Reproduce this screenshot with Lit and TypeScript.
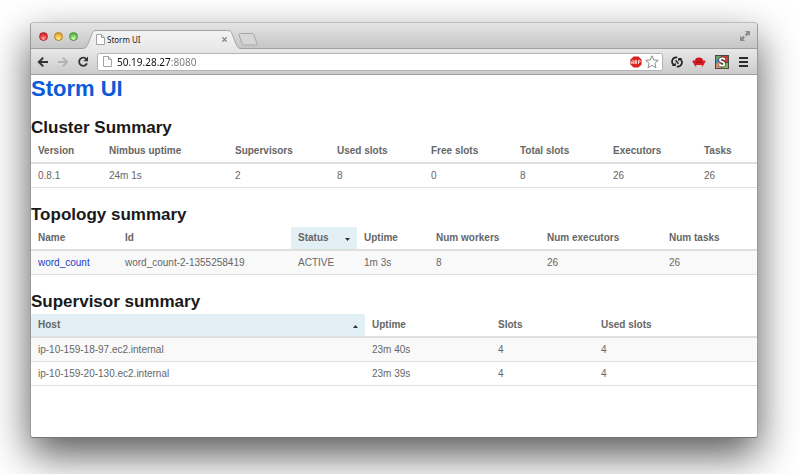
import { LitElement, html, css, svg, nothing } from "lit";
import { customElement, property } from "lit/decorators.js";

interface Column {
  label: string;
  weight: number;
  sort?: "up" | "down";
}

interface Cell {
  text: string;
  href?: string;
}

const pageIcon = svg`
  <path d="M0.5 0.5 H5.5 L8.5 3.5 V10.5 H0.5 Z" fill="#fdfdfd" stroke="#a2a2a2"/>
  <path d="M5.5 0.5 V3.5 H8.5" fill="none" stroke="#a2a2a2"/>`;

@customElement("summary-table")
export class SummaryTable extends LitElement {
  @property() heading = "";
  @property({ type: Boolean }) striped = false;
  @property({ attribute: false }) columns: Column[] = [];
  @property({ attribute: false }) rows: Cell[][] = [];

  static styles = css`
    :host {
      display: block;
    }
    .heading {
      margin: 0;
      padding-top: 2px;
      font-size: 17px;
      line-height: 24px;
      font-weight: bold;
      color: #1a1a1a;
    }
    .table {
      width: 100%;
      table-layout: fixed;
      border-collapse: separate;
      border-spacing: 0;
      font-size: 10px;
      line-height: 23px;
      color: #666;
    }
    .head,
    .cell {
      box-sizing: border-box;
      padding: 0 7px;
      text-align: left;
      white-space: nowrap;
    }
    .head {
      height: 24px;
      line-height: 22px;
      border-bottom: 2px solid #dfdfdf;
    }
    .cell {
      height: 24px;
      border-bottom: 1px solid #dfdfdf;
    }
    .sorted {
      background: #e2eff5;
      background-clip: padding-box;
      border-radius: 2px 2px 0 0;
    }
    .label {
      display: flex;
      align-items: center;
      justify-content: space-between;
    }
    .arrow {
      width: 5px;
      height: 3px;
      margin-top: 3px;
      fill: #333;
    }
    .striped .row:nth-child(odd) .cell {
      background: #f9f9f9;
    }
    .link {
      color: #1d3fc4;
      text-decoration: none;
    }
  `;

  render() {
    const total = this.columns.reduce((sum, c) => sum + c.weight, 0);
    return html`
      <h2 class="heading" id="heading">${this.heading}</h2>
      <table class="table ${this.striped ? "striped" : ""}" aria-labelledby="heading">
        <colgroup>
          ${this.columns.map(
            (c) => html`<col style="width:${(c.weight / total) * 100}%" />`
          )}
        </colgroup>
        <thead>
          <tr>
            ${this.columns.map(
              (c) => html`<th scope="col" class="head ${c.sort ? "sorted" : ""}">
                <div class="label">
                  ${c.label}
                  ${c.sort
                    ? html`<svg class="arrow" viewBox="0 0 5 3" aria-hidden="true">
                        <path d=${c.sort === "down" ? "M0 0H5L2.5 3Z" : "M0 3H5L2.5 0Z"} />
                      </svg>`
                    : nothing}
                </div>
              </th>`
            )}
          </tr>
        </thead>
        <tbody>
          ${this.rows.map(
            (r) => html`<tr class="row">
              ${r.map(
                (c) => html`<td class="cell">
                  ${c.href ? html`<a class="link" href=${c.href}>${c.text}</a>` : c.text}
                </td>`
              )}
            </tr>`
          )}
        </tbody>
      </table>
    `;
  }
}

@customElement("browser-tabs")
export class BrowserTabs extends LitElement {
  static styles = css`
    :host {
      display: flex;
      align-items: flex-end;
      height: 25px;
      padding: 0 7px 0 8px;
      background: linear-gradient(#e4e4e4, #c6c6c6);
      border-bottom: 1px solid #a0a0a0;
      border-radius: 3px 3px 0 0;
    }
    .lights {
      display: flex;
      gap: 6px;
      align-self: center;
      padding-top: 1px;
    }
    .light {
      box-sizing: border-box;
      width: 9px;
      height: 9px;
      padding: 0;
      border: 1px solid;
      border-radius: 50%;
    }
    .close {
      border-color: #a8272b;
      background: radial-gradient(circle at 50% 85%, #ffb0a4, #ea2f37 60%, #c81d25);
    }
    .minimise {
      border-color: #b8801f;
      background: radial-gradient(circle at 50% 85%, #fff0a0, #f3b234 60%, #d08d1c);
    }
    .zoom {
      border-color: #4c8c3c;
      background: radial-gradient(circle at 50% 85%, #dcffc0, #6cc456 60%, #4a9c3c);
    }
    .tab {
      position: relative;
      display: flex;
      align-items: center;
      box-sizing: border-box;
      width: 159px;
      height: 19px;
      margin: 0 -3px -1px 4px;
      padding: 0 14px;
    }
    .shape {
      position: absolute;
      inset: 0;
      width: 100%;
      height: 100%;
    }
    .favicon {
      position: relative;
      width: 9px;
      height: 11px;
    }
    .title {
      position: relative;
      flex: 1;
      margin-left: 2px;
      font-family: "Noto Sans", sans-serif;
      font-size: 8px;
      line-height: 16px;
      color: #222;
    }
    .dismiss {
      position: relative;
      display: flex;
      padding: 0;
      border: 0;
      background: none;
    }
    .plus {
      display: flex;
      padding: 0 0 2px;
      border: 0;
      background: none;
    }
    .expand {
      display: flex;
      align-self: center;
      margin-left: auto;
      padding: 0;
      border: 0;
      background: none;
    }
  `;

  render() {
    return html`
      <div class="lights">
        <button class="light close" aria-label="Close"></button>
        <button class="light minimise" aria-label="Minimise"></button>
        <button class="light zoom" aria-label="Zoom"></button>
      </div>
      <div class="tab">
        <svg class="shape" viewBox="0 0 161 19" preserveAspectRatio="none" aria-hidden="true">
          <defs>
            <linearGradient id="fill" x1="0" y1="0" x2="0" y2="1">
              <stop offset="0" stop-color="#f4f4f4" />
              <stop offset="1" stop-color="#e8e8e8" />
            </linearGradient>
          </defs>
          <path
            d="M0 18.5 C4 18.5 5 16.5 6 14 L10 4 C11 1.5 12 .5 15 .5 H147 C150 .5 151 1.5 152 4 L156 14 C157 16.5 158 18.5 161 18.5 V19 H0 Z"
            fill="url(#fill)"
          />
          <path
            d="M0 18.5 C4 18.5 5 16.5 6 14 L10 4 C11 1.5 12 .5 15 .5 H147 C150 .5 151 1.5 152 4 L156 14 C157 16.5 158 18.5 161 18.5"
            fill="none"
            stroke="#a4a4a4"
          />
        </svg>
        <svg class="favicon" viewBox="0 0 9 11" aria-hidden="true">${pageIcon}</svg>
        <span class="title">Storm UI</span>
        <button class="dismiss" aria-label="Close tab">
          <svg width="5" height="5" viewBox="0 0 5 5">
            <path d="M.3 .3 L4.7 4.7 M4.7 .3 L.3 4.7" stroke="#777" stroke-width="1.1" />
          </svg>
        </button>
      </div>
      <button class="plus" aria-label="New tab">
        <svg width="20" height="13" viewBox="0 0 20 13">
          <path
            d="M2.5 .5 H14 C15 .5 15.6 1 16 2 L19 10.5 C19.3 11.7 19 12 18 12 H6 C5 12 4.4 11.5 4 10.5 L1 2 C.7 1 1 .5 2.5 .5 Z"
            fill="#d6d6d6"
            stroke="#a8a8a8"
          />
        </svg>
      </button>
      <button class="expand" aria-label="Full screen">
        <svg width="10" height="10" viewBox="0 0 10 10">
          <path d="M5 0 H10 V5 L8.4 3.4 L6.4 5.2 L4.9 3.6 L6.7 1.7 Z" fill="#8a8a8a" />
          <path d="M0 5 L1.6 6.5 L3.4 4.8 L5 6.4 L3.3 8.3 L5 10 H0 Z" fill="#8a8a8a" />
        </svg>
      </button>
    `;
  }
}

@customElement("browser-toolbar")
export class BrowserToolbar extends LitElement {
  static styles = css`
    :host {
      display: flex;
      align-items: center;
      height: 25px;
      padding: 0 8px 0 6px;
      background: linear-gradient(#e8e8e8, #cbcbcb);
      border-bottom: 1px solid #9c9c9c;
    }
    .tool {
      display: flex;
      padding: 0;
      border: 0;
      background: none;
    }
    .nav {
      display: flex;
      align-items: center;
      gap: 8px;
    }
    .address {
      display: flex;
      align-items: center;
      flex: 1;
      min-width: 0;
      box-sizing: border-box;
      height: 18px;
      margin: 0 8px;
      padding: 0 3px 0 5px;
      border: 1px solid #b4b4b4;
      border-radius: 2px;
      background: #fff;
    }
    .url {
      flex: 1;
      min-width: 0;
      margin: 0 4px 0 5px;
      padding: 0;
      border: 0;
      outline: 0;
      font-family: "Noto Sans", sans-serif;
      font-size: 10px;
      line-height: 16px;
      color: transparent;
      background: linear-gradient(90deg, #111 54px, #777 54px);
      background-clip: text;
      -webkit-background-clip: text;
    }
    .badges {
      display: flex;
      align-items: center;
      gap: 3px;
    }
    .extensions {
      display: flex;
      align-items: center;
      gap: 9px;
    }
  `;

  render() {
    const star = "M7 .8 L8.8 5 L13.3 5.3 L9.9 8.3 L11 12.8 L7 10.4 L3 12.8 L4.1 8.3 L.7 5.3 L5.2 5 Z";
    return html`
      <div class="nav">
        <button class="tool" aria-label="Back">
          <svg width="12" height="12" viewBox="0 0 12 12" fill="none" stroke="#333" stroke-width="2">
            <path d="M11 6 H2.5 M6.2 1.6 L1.8 6 L6.2 10.4" />
          </svg>
        </button>
        <button class="tool" aria-label="Forward">
          <svg width="12" height="12" viewBox="0 0 12 12" fill="none" stroke="#b4b4b4" stroke-width="2">
            <path d="M1 6 H9.5 M5.8 1.6 L10.2 6 L5.8 10.4" />
          </svg>
        </button>
        <button class="tool" aria-label="Reload">
          <svg width="12" height="12" viewBox="0 0 12 12">
            <path d="M9.3 3 A4.1 4.1 0 1 0 10 7.4" fill="none" stroke="#333" stroke-width="1.8" />
            <path d="M11 .5 V5.2 H6.3 Z" fill="#333" />
          </svg>
        </button>
      </div>
      <div class="address">
        <svg width="9" height="11" viewBox="0 0 9 11" aria-hidden="true">${pageIcon}</svg>
        <input class="url" type="text" aria-label="Address" .value=${"50.19.28.27:8080"} />
        <div class="badges">
          <button class="tool" aria-label="Ad blocker">
            <svg width="12" height="12" viewBox="0 0 12 12">
              <path d="M3.6 .4 H8.4 L11.6 3.6 V8.4 L8.4 11.6 H3.6 L.4 8.4 V3.6 Z" fill="#d8201c" />
              <path
                d="M1.8 8 V5.4 L2.7 4.3 L3.6 5.4 V8 M1.8 6.6 H3.6 M5 4.3 V7.7 H6.2 L6.9 7 L6.2 6 L6.8 5.2 L6.2 4.3 Z M5 6 H6.2 M8.4 8 V4.3 H9.7 L10.3 5.2 L9.7 6.2 H8.4"
                fill="none"
                stroke="#fbe4e4"
                stroke-width=".9"
              />
            </svg>
          </button>
          <button class="tool" aria-label="Bookmark">
            <svg width="14" height="14" viewBox="0 0 14 14">
              <path d=${star} fill="#fff" stroke="#8c8c8c" stroke-linejoin="round" />
            </svg>
          </button>
        </div>
      </div>
      <div class="extensions">
        <button class="tool" aria-label="Sync">
          <svg width="12" height="12" viewBox="0 0 12 12" fill="none" stroke="#222">
            <path d="M6.2 1.4 H5.6 A4.2 4.2 0 0 0 2.6 8.8 M5.8 10.6 H6.4 A4.2 4.2 0 0 0 9.4 3.2" stroke-width="1.7" />
            <path d="M.8 9.9 H4.8 V6.6 Z M11.2 2.1 H7.2 V5.4 Z" fill="#222" stroke="none" />
            <path d="M4.6 4.2 L7.4 7.8" stroke-width="1.4" />
          </svg>
        </button>
        <button class="tool" aria-label="Couch">
          <svg width="14" height="12" viewBox="0 0 14 12">
            <path d="M3 4.6 C3 2.6 4.6 1.6 7 1.6 S11 2.6 11 4.6 V7 H3 Z" fill="#c9161b" />
            <path
              d="M1.8 4.3 C3.2 4.2 3.8 5.2 4 6.6 H10 C10.2 5.2 10.8 4.2 12.2 4.3 C14 4.6 13.8 6.8 12.4 7.2 L11.9 9 H11 V10.4 H9.8 V9 H4.2 V10.4 H3 V9 H2.1 L1.6 7.2 C.2 6.8 0 4.6 1.8 4.3 Z"
              fill="#d81e22"
            />
            <path d="M4 6.5 H10" stroke="#8c0c10" stroke-width=".7" />
          </svg>
        </button>
        <button class="tool" aria-label="Scribe">
          <svg width="14" height="14" viewBox="0 0 14 14">
            <rect width="14" height="14" fill="#4a4a42" />
            <path d="M1 1 H6 V6 H1 Z" fill="#6fa06a" />
            <path d="M7 1 H13 V7 H7 Z" fill="#cf3a2c" />
            <path d="M1 7 H6 V13 H1 Z" fill="#d88c6c" />
            <path d="M7 8 H13 V13 H7 Z" fill="#86b45c" />
            <path d="M1 5 L4 3 L4 7 L1 9 Z" fill="#4f86b0" />
            <path
              d="M10 4.6 C9 3 5 2.8 4.9 5 C4.9 7.2 9.6 6.6 9.5 9 C9.4 11.2 5.4 11 4.2 9.4"
              fill="none"
              stroke="#222"
              stroke-width="3"
            />
            <path
              d="M10 4.6 C9 3 5 2.8 4.9 5 C4.9 7.2 9.6 6.6 9.5 9 C9.4 11.2 5.4 11 4.2 9.4"
              fill="none"
              stroke="#fff"
              stroke-width="2"
            />
          </svg>
        </button>
        <button class="tool" aria-label="Menu">
          <svg width="11" height="10" viewBox="0 0 11 10" fill="#2c2c2c">
            <path d="M1 0 H10 V2 H1 Z M1 4 H10 V6 H1 Z M1 8 H10 V10 H1 Z" />
          </svg>
        </button>
      </div>
    `;
  }
}

const clusterColumns: Column[] = [
  { label: "Version", weight: 71 },
  { label: "Nimbus uptime", weight: 126 },
  { label: "Supervisors", weight: 102 },
  { label: "Used slots", weight: 94 },
  { label: "Free slots", weight: 89 },
  { label: "Total slots", weight: 93 },
  { label: "Executors", weight: 91 },
  { label: "Tasks", weight: 60 },
];

const topologyColumns: Column[] = [
  { label: "Name", weight: 87 },
  { label: "Id", weight: 173 },
  { label: "Status", weight: 66, sort: "down" },
  { label: "Uptime", weight: 72 },
  { label: "Num workers", weight: 111 },
  { label: "Num executors", weight: 122 },
  { label: "Num tasks", weight: 95 },
];

const supervisorColumns: Column[] = [
  { label: "Host", weight: 334, sort: "up" },
  { label: "Uptime", weight: 126 },
  { label: "Slots", weight: 103 },
  { label: "Used slots", weight: 163 },
];

const cells = (...texts: string[]): Cell[] => texts.map((text) => ({ text }));

const clusterRows = [cells("0.8.1", "24m 1s", "2", "8", "0", "8", "26", "26")];

const topologyRows = [
  [
    { text: "word_count", href: "#word_count" },
    ...cells("word_count-2-1355258419", "ACTIVE", "1m 3s", "8", "26", "26"),
  ],
];

const supervisorRows = [
  cells("ip-10-159-18-97.ec2.internal", "23m 40s", "4", "4"),
  cells("ip-10-159-20-130.ec2.internal", "23m 39s", "4", "4"),
];

@customElement("app-root")
export class AppRoot extends LitElement {
  static styles = css`
    :host {
      display: flex;
      box-sizing: border-box;
      min-height: 100vh;
      padding: 22px 42px 36px 30px;
      overflow: hidden;
      background: #fff;
      font-family: "Liberation Sans", Arial, sans-serif;
    }
    .window {
      flex: 1;
      min-width: 0;
      border: 1px solid #9a9a9a;
      border-top-color: #bcbcbc;
      border-bottom-color: #747674;
      border-radius: 4px 4px 3px 3px;
      background: #fff;
      box-shadow: 0 17px 40px rgba(0, 0, 0, 0.66);
    }
    .page {
      display: flex;
      flex-direction: column;
      gap: 13px;
    }
    .title {
      margin: 0;
      padding-top: 2px;
      font-size: 22px;
      line-height: 24px;
    }
    .home {
      color: #0b5bd8;
      text-decoration: none;
    }
  `;

  render() {
    return html`
      <div class="window">
        <browser-tabs></browser-tabs>
        <browser-toolbar></browser-toolbar>
        <main class="page">
          <h1 class="title"><a class="home" href="#">Storm UI</a></h1>
          <summary-table
            heading="Cluster Summary"
            .columns=${clusterColumns}
            .rows=${clusterRows}
          ></summary-table>
          <summary-table
            heading="Topology summary"
            striped
            .columns=${topologyColumns}
            .rows=${topologyRows}
          ></summary-table>
          <summary-table
            heading="Supervisor summary"
            striped
            .columns=${supervisorColumns}
            .rows=${supervisorRows}
          ></summary-table>
        </main>
      </div>
    `;
  }
}
